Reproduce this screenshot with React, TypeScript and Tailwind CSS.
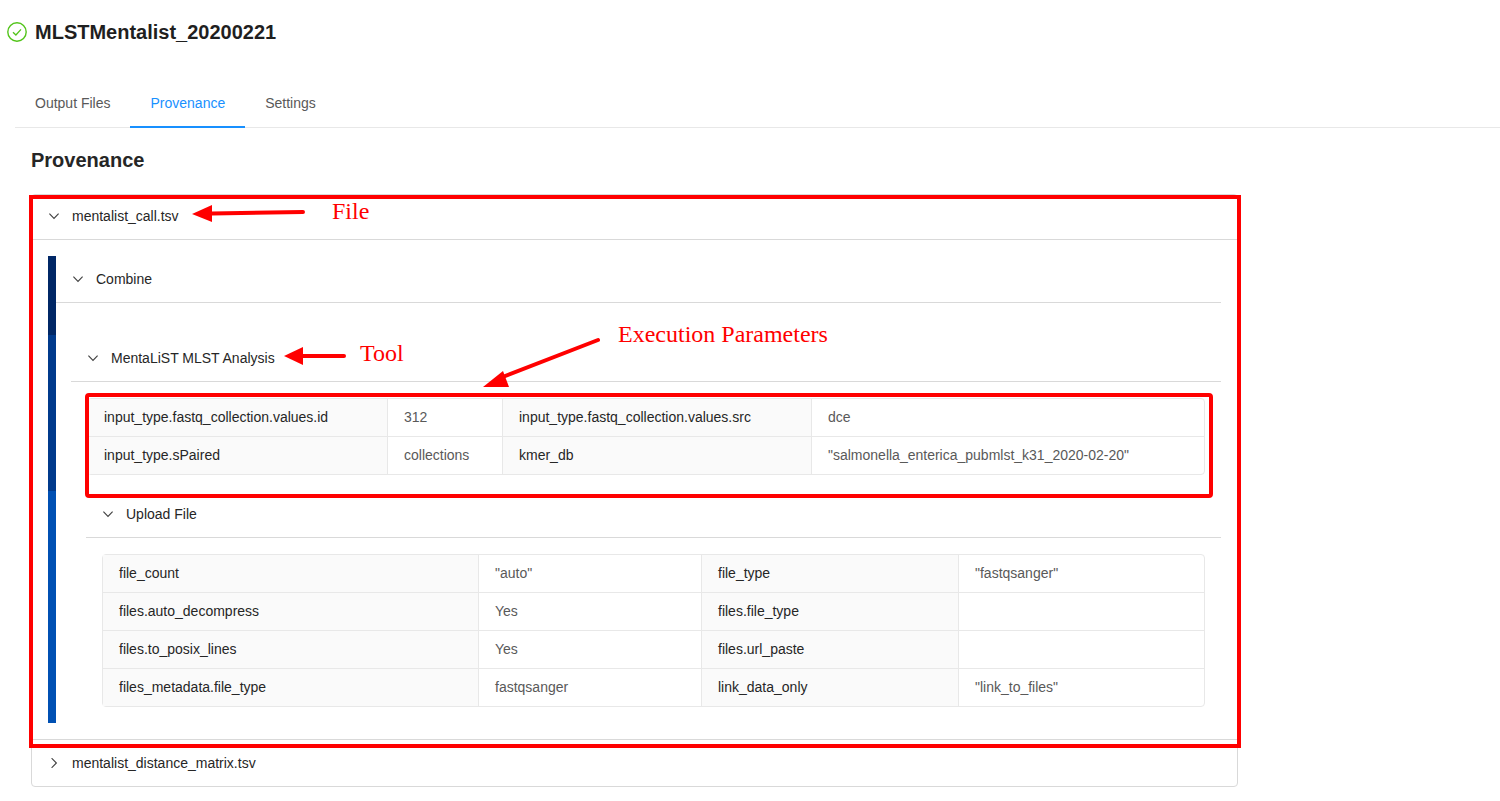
import React from 'react';

type Row = [string, string, string, string];

const toolParams: Row[] = [
  ['input_type.fastq_collection.values.id', '312', 'input_type.fastq_collection.values.src', 'dce'],
  ['input_type.sPaired', 'collections', 'kmer_db', '"salmonella_enterica_pubmlst_k31_2020-02-20"'],
];

const uploadParams: Row[] = [
  ['file_count', '"auto"', 'file_type', '"fastqsanger"'],
  ['files.auto_decompress', 'Yes', 'files.file_type', ''],
  ['files.to_posix_lines', 'Yes', 'files.url_paste', ''],
  ['files_metadata.file_type', 'fastqsanger', 'link_data_only', '"link_to_files"'],
];

const ParamTable: React.FC<{ rows: Row[]; columns: string; className: string }> = ({ rows, columns, className }) => (
  <div className={`rounded border border-[#e8e8e8] text-sm ${className}`}>
    {rows.map((row, i) => (
      <div key={i} className={`grid ${columns} ${i > 0 ? 'h-[38px] border-t border-[#e8e8e8]' : 'h-[37px]'}`}>
        <div className="flex items-center bg-[#fafafa] pb-[2px] pl-4 text-[#262626]">{row[0]}</div>
        <div className="flex items-center border-l border-[#e8e8e8] pb-[2px] pl-4 text-[#595959]">{row[1]}</div>
        <div className="flex items-center border-l border-[#e8e8e8] bg-[#fafafa] pb-[2px] pl-4 text-[#262626]">{row[2]}</div>
        <div className="flex items-center border-l border-[#e8e8e8] pb-[2px] pl-4 text-[#595959]">{row[3]}</div>
      </div>
    ))}
  </div>
);

const Chevron: React.FC<{ open: boolean }> = ({ open }) => (
  <svg width="10" height="10" viewBox="0 0 10 10" fill="none" stroke="#404040" strokeWidth="1.1" className="ml-px mr-[13px]">
    {open ? <path d="M0.4 2.6 L5 7.4 L9.6 2.6" /> : <path d="M2.6 0.2 L7.4 5 L2.6 9.8" />}
  </svg>
);

const PanelHeader: React.FC<{ label: string; open?: boolean; className: string }> = ({ label, open = true, className }) => (
  <div className={`flex items-center text-sm text-[#262626] ${className}`}>
    <Chevron open={open} />
    <span>{label}</span>
  </div>
);

// red notes drawn on top of the screenshot
const Annotations = () => (
  <div className="pointer-events-none absolute inset-0">
    <div className="absolute left-[29px] top-[195px] h-[553px] w-[1212px] border-4 border-[#ff0000]" />
    <div className="absolute left-[85px] top-[393px] h-[105px] w-[1128px] rounded-sm border-4 border-[#ff0000]" />
    <svg className="absolute left-0 top-0" width="1500" height="801" fill="#ff0000" stroke="none">
      <path d="M212 213.5 L303 212" stroke="#ff0000" strokeWidth="4" strokeLinecap="round" />
      <path d="M192 214 L212 205 L212 222 Z" />
      <path d="M303 356 L344 356" stroke="#ff0000" strokeWidth="4" strokeLinecap="round" />
      <path d="M284 356 L303 347 L303 365 Z" />
      <path d="M500 378 L598 340" stroke="#ff0000" strokeWidth="4" strokeLinecap="round" />
      <path d="M483 387 L503 371 L509 387 Z" />
    </svg>
    <span className="absolute left-[332px] top-[197px] font-['Liberation_Serif',serif] text-[24px] leading-7 text-[#ff0000]">File</span>
    <span className="absolute left-[360px] top-[339px] font-['Liberation_Serif',serif] text-[24px] leading-7 text-[#ff0000]">Tool</span>
    <span className="absolute left-[618px] top-[320px] font-['Liberation_Serif',serif] text-[24px] leading-7 text-[#ff0000]">Execution Parameters</span>
  </div>
);

export default function App() {
  return (
    <div className="relative h-[801px] w-[1500px] overflow-hidden bg-white font-['Liberation_Sans',Arial,sans-serif]">
      <div className="flex h-[64px] items-center pl-[7px]">
        <svg width="20" height="20" viewBox="0 0 20 20" fill="none" stroke="#52c41a" className="mr-2">
          <circle cx="10" cy="10" r="9.2" strokeWidth="1.4" />
          <path d="M6 10.2 L8.9 13 L14 7.4" strokeWidth="1.3" />
        </svg>
        <h1 className="text-xl font-bold text-[#1f1f1f]">MLSTMentalist_20200221</h1>
      </div>

      <div className="ml-[15px] mt-4 flex h-[48px] border-b border-[#e8e8e8] text-sm text-[#595959]">
        <div className="flex h-[48px] items-center border-b-2 border-transparent px-5">Output Files</div>
        <div className="flex h-[48px] items-center border-b-2 border-[#1890ff] px-5 text-[#1890ff]">Provenance</div>
        <div className="flex h-[48px] items-center border-b-2 border-transparent px-5">Settings</div>
      </div>

      <h2 className="ml-[31px] mt-[18px] text-xl leading-7 font-bold text-[#262626]">Provenance</h2>

      <div className="ml-[31px] mt-[20px] w-[1207px] rounded border border-[#d9d9d9]">
        <PanelHeader label="mentalist_call.tsv" className="h-[45px] border-b border-[#d9d9d9] pb-[2px] pl-4" />
        <div className="flex h-[500px] border-b border-[#d9d9d9] pl-4 pt-4">
          <div className="flex h-[467px] w-2 flex-col">
            <div className="h-[79px] bg-[#002766]" />
            <div className="h-[156px] bg-[#003a8c]" />
            <div className="flex-1 bg-[#0050b3]" />
          </div>
          <div className="w-[1165px]">
            <PanelHeader label="Combine" className="h-[47px] border-b border-[#d9d9d9] pl-4" />
            <div className="ml-[15px] mt-[32px]">
              <PanelHeader label="MentaLiST MLST Analysis" className="h-[47px] border-b border-[#d9d9d9] pl-4" />
              <ParamTable
                rows={toolParams}
                columns="grid-cols-[299px_115px_309px_1fr]"
                className="ml-4 mr-4 mt-4"
              />
              <div className="ml-[15px] mt-[17px]">
                <PanelHeader label="Upload File" className="h-[46px] border-b border-[#d9d9d9] pb-[2px] pl-4" />
                <ParamTable
                  rows={uploadParams}
                  columns="grid-cols-[375px_223px_257px_1fr]"
                  className="ml-4 mr-4 mt-4"
                />
              </div>
            </div>
          </div>
        </div>
        <PanelHeader label="mentalist_distance_matrix.tsv" open={false} className="h-[46px] pl-4" />
      </div>

      <Annotations />
    </div>
  );
}
